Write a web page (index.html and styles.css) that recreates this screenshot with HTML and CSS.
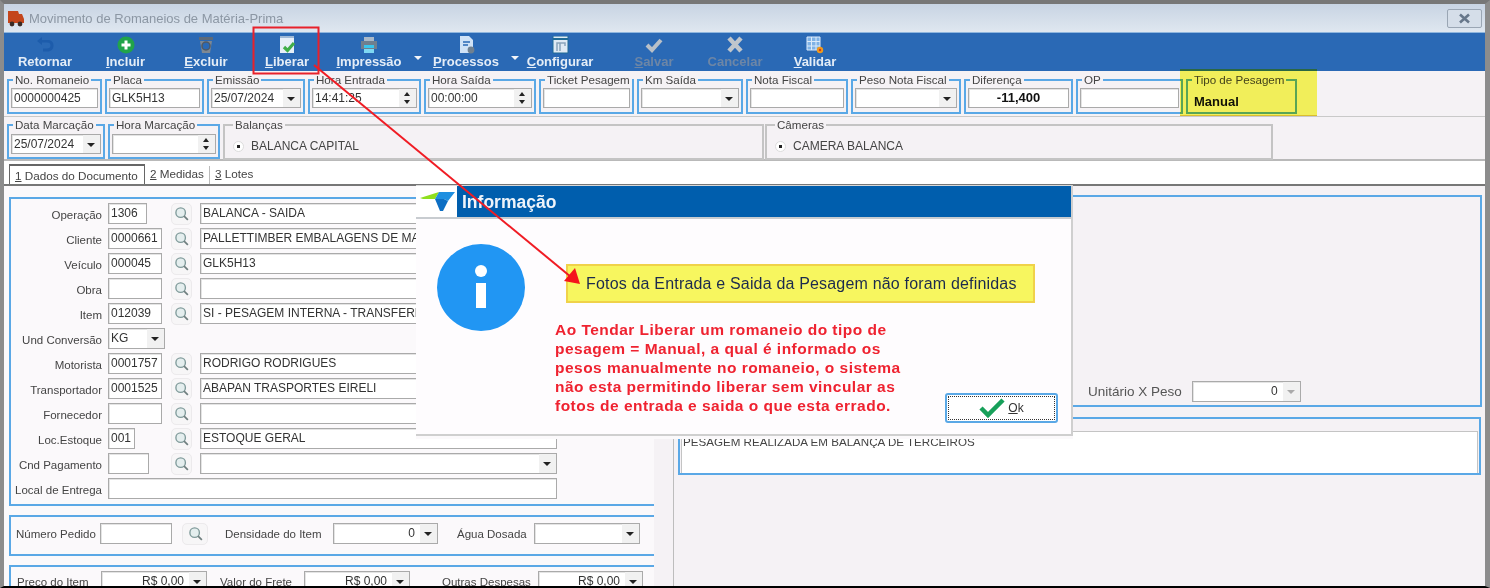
FILE: index.html
```html
<!DOCTYPE html>
<html lang="pt">
<head>
    <meta charset="UTF-8">
    <title>Movimento de Romaneios de Matéria-Prima</title>
    <link rel="stylesheet" href="styles.css">
</head>
<body>
    <svg class="svg-defs" width="0" height="0">
        <symbol id="lupa" viewBox="0 0 20 20">
            <circle cx="9" cy="9" r="5.6" fill="#e4eeee" stroke="#7f9a9a" stroke-width="1.6"/>
            <path d="M13 13l4.5 4.5" stroke="#6f7f7f" stroke-width="2"/>
        </symbol>
    </svg>

    <div class="window">
        <div class="titlebar">
            <svg class="app-icon" viewBox="0 0 18 17">
                <path d="M1 1h10l1 3h3l2 5v4H1z" fill="#c4461c"/>
                <circle cx="5" cy="14" r="2.4" fill="#3a2a24"/>
                <circle cx="13" cy="14" r="2.4" fill="#3a2a24"/>
            </svg>
            <span class="title-text">Movimento de Romaneios de Matéria-Prima</span>
            <div class="close-btn">
                <svg width="13" height="11" viewBox="0 0 13 11"><path d="M2 1.5l9 8M11 1.5l-9 8" stroke="#67778a" stroke-width="2.6"/></svg>
            </div>
        </div>

        <div class="toolbar">
            <div class="tool">
                <svg class="tool-icon" viewBox="0 0 20 18"><path d="M7 1L2 5l5 4V6.5h5c2.4 0 3.5 1.2 3.5 3s-1.400 3-3.500 3H8v3h4.500c3.800 0 6-2.400 6-6s-2.300-5.500-6-5.500H7z" fill="#1d5cab"/></svg>
                <span class="tool-label">Retornar</span>
            </div>
            <div class="tool">
                <svg class="tool-icon" viewBox="0 0 20 18"><circle cx="10" cy="9" r="8.500" fill="#21a44a"/><path d="M10 4.500v9M5.500 9h9" stroke="#fff" stroke-width="3"/></svg>
                <span class="tool-label"><u>I</u>ncluir</span>
            </div>
            <div class="tool">
                <svg class="tool-icon" viewBox="0 0 20 18"><path d="M3 1h14v3H3z" fill="#5d6a78"/><path d="M4 5h12l-2 12H6z" fill="#7d8894"/><circle cx="10" cy="10" r="4" fill="#2a69b5" stroke="#4f5a66" stroke-width="1.500"/></svg>
                <span class="tool-label"><u>E</u>xcluir</span>
            </div>
            <div class="tool">
                <svg class="tool-icon" viewBox="0 0 20 18"><path d="M3 0h14v17H3z" fill="#e6eff8"/><path d="M3 0h14v2H3z" fill="#9fb9d6"/><path d="M7 11l3.500 3.500L17 7" fill="none" stroke="#3fae49" stroke-width="3.200"/></svg>
                <span class="tool-label"><u>L</u>iberar</span>
            </div>
            <div class="tool">
                <svg class="tool-icon" viewBox="0 0 20 18"><path d="M5 1h10v4H5z" fill="#a9b9c9"/><path d="M2 5h16v8H2z" fill="#6f7f8f"/><path d="M5 9h10v3H5z" fill="#38c6ee"/><path d="M5 13h10v4H5z" fill="#7fd8f2"/></svg>
                <span class="tool-label"><u>I</u>mpressão</span>
            </div>
            <div class="tool-caret"></div>
            <div class="tool">
                <svg class="tool-icon" viewBox="0 0 20 18"><path d="M4 0h9l4 4v13H4z" fill="#cfe2f6"/><path d="M7 6h7M7 9h5" stroke="#2a69b5" stroke-width="1.300"/><circle cx="15" cy="14" r="3.400" fill="#6f8090"/></svg>
                <span class="tool-label"><u>P</u>rocessos</span>
            </div>
            <div class="tool-caret"></div>
            <div class="tool">
                <svg class="tool-icon" viewBox="0 0 20 18"><path d="M3 0h15v17H3z" fill="#dfeaf4" stroke="#1f6b96"/><path d="M3 3h15" stroke="#1f6b96" stroke-width="2"/><path d="M7 15V7h3v8M10 7h5v3" fill="none" stroke="#8aa4ba" stroke-width="1.500"/></svg>
                <span class="tool-label"><u>C</u>onfigurar</span>
            </div>
            <div class="tool-gap"></div>
            <div class="tool">
                <svg class="tool-icon" viewBox="0 0 20 18"><path d="M3 9l5 5 9-10" fill="none" stroke="#b9c0c8" stroke-width="4"/></svg>
                <span class="tool-label tool-off"><u>S</u>alvar</span>
            </div>
            <div class="tool">
                <svg class="tool-icon" viewBox="0 0 20 18"><path d="M4 2l12 13M16 2L4 15" stroke="#c0c6cc" stroke-width="4.500"/></svg>
                <span class="tool-label tool-off">Cancelar</span>
            </div>
            <div class="tool">
                <svg class="tool-icon" viewBox="0 0 20 18"><path d="M2 1h13v13H2zM2 5.500h13M2 10h13M6.500 1v13M11 1v13" fill="#7fb2e6" stroke="#dcebfa"/><circle cx="15" cy="14" r="3.200" fill="#ef9a1c"/><circle cx="15" cy="14" r="1.200" fill="#d13a1c"/></svg>
                <span class="tool-label"><u>V</u>alidar</span>
            </div>
        </div>

        <div class="row-top">
            <fieldset class="group"><legend>No. Romaneio</legend><div class="field">0000000425</div></fieldset>
            <fieldset class="group"><legend>Placa</legend><div class="field">GLK5H13</div></fieldset>
            <fieldset class="group"><legend>Emissão</legend><div class="field combo">25/07/2024<span class="arrow"></span></div></fieldset>
            <fieldset class="group"><legend>Hora Entrada</legend><div class="field combo">14:41:25<span class="spin"></span></div></fieldset>
            <fieldset class="group"><legend>Hora Saída</legend><div class="field combo">00:00:00<span class="spin"></span></div></fieldset>
            <fieldset class="group"><legend>Ticket Pesagem</legend><div class="field"></div></fieldset>
            <fieldset class="group"><legend>Km Saída</legend><div class="field combo"><span class="arrow"></span></div></fieldset>
            <fieldset class="group"><legend>Nota Fiscal</legend><div class="field"></div></fieldset>
            <fieldset class="group"><legend>Peso Nota Fiscal</legend><div class="field combo"><span class="arrow"></span></div></fieldset>
            <fieldset class="group"><legend>Diferença</legend><div class="field field-strong">-11,400</div></fieldset>
            <fieldset class="group"><legend>OP</legend><div class="field"></div></fieldset>
            <fieldset class="group"><legend>Tipo de Pesagem</legend><div class="plain-value">Manual</div></fieldset>
        </div>

        <div class="row-second">
            <fieldset class="group group-data"><legend>Data Marcação</legend><div class="field combo">25/07/2024<span class="arrow"></span></div></fieldset>
            <fieldset class="group group-hora"><legend>Hora Marcação</legend><div class="field combo"><span class="spin"></span></div></fieldset>
            <fieldset class="group-gray group-balancas"><legend>Balanças</legend><div class="radio-line"><span class="radio"></span>BALANCA CAPITAL</div></fieldset>
            <fieldset class="group-gray group-cameras"><legend>Câmeras</legend><div class="radio-line"><span class="radio"></span>CAMERA BALANCA</div></fieldset>
        </div>

        <div class="tabs">
            <div class="tab tab-active"><u>1</u> Dados do Documento</div>
            <div class="tab tab-sep"><u>2</u> Medidas</div>
            <div class="tab"><u>3</u> Lotes</div>
        </div>

        <div class="content">
            <div class="col-left">
                <div class="box box-main">
                    <div class="form-grid">
                        <label>Operação</label><div class="field w-39">1306</div><div class="lupa"><svg><use href="#lupa"/></svg></div><div class="field">BALANCA - SAIDA</div>
                        <label>Cliente</label><div class="field w-54">0000661</div><div class="lupa"><svg><use href="#lupa"/></svg></div><div class="field">PALLETTIMBER EMBALAGENS DE MADEIRA LTDA</div>
                        <label>Veículo</label><div class="field w-54">000045</div><div class="lupa"><svg><use href="#lupa"/></svg></div><div class="field">GLK5H13</div>
                        <label>Obra</label><div class="field w-54"></div><div class="lupa"><svg><use href="#lupa"/></svg></div><div class="field"></div>
                        <label>Item</label><div class="field w-54">012039</div><div class="lupa"><svg><use href="#lupa"/></svg></div><div class="field">SI - PESAGEM INTERNA - TRANSFERENCIA</div>
                        <label>Und Conversão</label><div class="field combo">KG<span class="arrow"></span></div><div></div><div></div>
                        <label>Motorista</label><div class="field w-54">0001757</div><div class="lupa"><svg><use href="#lupa"/></svg></div><div class="field">RODRIGO RODRIGUES</div>
                        <label>Transportador</label><div class="field w-54">0001525</div><div class="lupa"><svg><use href="#lupa"/></svg></div><div class="field">ABAPAN TRASPORTES EIRELI</div>
                        <label>Fornecedor</label><div class="field w-54"></div><div class="lupa"><svg><use href="#lupa"/></svg></div><div class="field"></div>
                        <label>Loc.Estoque</label><div class="field w-27">001</div><div class="lupa"><svg><use href="#lupa"/></svg></div><div class="field">ESTOQUE GERAL</div>
                        <label>Cnd Pagamento</label><div class="field w-41"></div><div class="lupa"><svg><use href="#lupa"/></svg></div><div class="field combo"><span class="arrow"></span></div>
                        <label>Local de Entrega</label><div class="field span-3"></div>
                    </div>
                </div>
                <div class="box box-pedido">
                    <label class="lbl-pedido">Número Pedido</label>
                    <div class="field w-72"></div>
                    <div class="lupa lupa-wide"><svg><use href="#lupa"/></svg></div>
                    <label class="lbl-densidade">Densidade do Item</label>
                    <div class="field combo num w-105">0<span class="arrow"></span></div>
                    <label class="lbl-agua">Água Dosada</label>
                    <div class="field combo w-106"><span class="arrow"></span></div>
                </div>
                <div class="box box-precos">
                    <label class="lbl-preco">Preço do Item</label>
                    <div class="field combo num w-106">R$ 0,00<span class="arrow"></span></div>
                    <label class="lbl-frete">Valor do Frete</label>
                    <div class="field combo num w-106">R$ 0,00<span class="arrow"></span></div>
                    <label class="lbl-outras">Outras Despesas</label>
                    <div class="field combo num w-105">R$ 0,00<span class="arrow"></span></div>
                </div>
            </div>
            <div class="col-right">
                <div class="panel panel-main">
                    <label class="lbl-unitario">Unitário X Peso</label>
                    <div class="field combo num w-109">0<span class="arrow arrow-off"></span></div>
                </div>
                <div class="panel panel-obs">
                    <div class="memo">PESAGEM REALIZADA EM BALANÇA DE TERCEIROS</div>
                </div>
            </div>
        </div>

        <div class="dialog">
            <div class="dialog-head">
                <div class="dialog-logo">
                    <svg width="35" height="19" viewBox="0 0 35 19">
                        <path d="M0 6L19 0l-4 7H3z" fill="#8fe01e"/>
                        <path d="M19 0h16l-7 9-4-2-9 0z" fill="#1f8fe0"/>
                        <path d="M15 7h9l4 2-5 10h-3z" fill="#0d6fc4"/>
                    </svg>
                </div>
                <div class="dialog-title">Informação</div>
            </div>
            <div class="dialog-body">
                <svg class="info-icon" viewBox="0 0 88 87">
                    <ellipse cx="44" cy="43.500" rx="44" ry="43.500" fill="#2196f3"/>
                    <circle cx="44" cy="27" r="6" fill="#fff"/>
                    <path d="M39 39h10v25H39z" fill="#fff"/>
                </svg>
                <div class="dialog-text">
                    <div class="notice">Fotos da Entrada e Saida da Pesagem não foram definidas</div>
                    <div class="msg-row">
                        <p class="red-note">Ao Tendar Liberar um romaneio do tipo de pesagem = Manual, a qual é informado os pesos manualmente no romaneio, o sistema não esta permitindo liberar sem vincular as fotos de entrada e saida o que esta errado.</p>
                        <div class="ok-btn">
                            <svg width="26" height="20" viewBox="0 0 26 20"><path d="M2 10l7 7L24 2" fill="none" stroke="#17a05a" stroke-width="4.500"/></svg>
                            <span><u>O</u>k</span>
                        </div>
                    </div>
                </div>
            </div>
        </div>

        <div class="mark-yellow"></div>
        <svg class="annotation" width="1490" height="588" viewBox="0 0 1490 588">
            <rect x="253.500" y="27.500" width="65" height="46" fill="none" stroke="#e8212b" stroke-width="2"/>
            <path d="M314 65L571 277" stroke="#f01c24" stroke-width="2"/>
            <path d="M580 284l-16-3 11-13z" fill="#f5141c"/>
        </svg>
    </div>
</body>
</html>
```

FILE: styles.css
```css
* {
    box-sizing: border-box;
}
body {
    margin: 0;
    background-color: #111;
    font-family: "Liberation Sans", Arial, sans-serif;
    font-size: 12px;
    color: #333;
    overflow: hidden;
}
.svg-defs {
    display: block;
    height: 0;
}
.window {
    position: relative;
    width: 1490px;
    height: 588px;
    overflow: hidden;
    background-color: #f5f2f5;
    border-top: 4px solid #777;
    border-left: 4px solid #8c8c8c;
    border-right: 5px solid #8c8c8c;
    border-bottom: 2px solid #000;
}

/* barra de titulo */
.titlebar {
    height: 28px;
    display: flex;
    align-items: center;
    padding: 0 3px 0 3px;
    background: linear-gradient(#c8d4e3, #dfe7f0);
}
.app-icon {
    width: 18px;
    height: 17px;
    margin-right: 4px;
}
.title-text {
    flex: 1;
    font-size: 13px;
    color: #8c97a4;
}
.close-btn {
    width: 35px;
    height: 19px;
    display: flex;
    align-items: center;
    justify-content: center;
    border: 1px solid #9aa6b4;
    border-radius: 2px;
    background-color: #d5dee9;
}

/* barra de ferramentas */
.toolbar {
    height: 39px;
    padding-left: 1px;
    display: grid;
    grid-template-columns: 80px 81px 80px 82px 82px 16px 80px 18px 72px 18px 80px 82px 78px;
    background-color: #2a69b5;
    border-top: 1px solid #8fb6de;
}
.tool {
    display: flex;
    flex-direction: column;
    align-items: center;
    padding-top: 3px;
}
.tool-icon {
    width: 20px;
    height: 18px;
}
.tool-label {
    margin-top: 1px;
    font-size: 13px;
    line-height: 14px;
    font-weight: bold;
    color: #e4edf7;
    white-space: nowrap;
}
.tool-off {
    color: #6d86a6;
}
.tool-caret {
    position: relative;
}
.tool-caret::after {
    content: "";
    display: block;
    margin: 23px auto 0;
    width: 0;
    border-left: 4px solid transparent;
    border-right: 4px solid transparent;
    border-top: 4px solid #f2f5f9;
}

/* grupos do cabecalho */
.row-top {
    height: 46px;
    padding: 2px 0 0 3px;
    display: grid;
    grid-template-columns: 95px 99px 98px 113px 112px 95px 106px 102px 110px 109px 107px 111px;
    column-gap: 3px;
    border-bottom: 1px solid #c9c9c9;
}
.row-second {
    height: 44px;
    padding: 1px 0 0 3px;
    display: grid;
    grid-template-columns: 98px 112px 541px 506px;
    column-gap: 3px;
    border-bottom: 2px solid #b9b9b9;
}
.group {
    min-width: 0;
    height: 41px;
    margin: 0;
    padding: 1px 2px 2px 2px;
    border: 2px solid #5aa8e6;
}
.group legend,
.group-gray legend {
    margin-left: 2px;
    padding: 0 2px;
    font-size: 11.600px;
    line-height: 14px;
    color: #444;
    white-space: nowrap;
}
.group .field {
    height: 20px;
    line-height: 18px;
}
.group-data .field,
.group-hora .field {
    margin-top: 1px;
}
.group-gray {
    min-width: 0;
    height: 42px;
    margin: 0;
    padding: 0 0 0 6px;
    border: 2px solid #c4c4c4;
}
.group-gray legend {
    margin-left: 2px;
}
.group-cameras {
    margin-left: -2px;
}
.radio-line {
    display: flex;
    align-items: center;
    margin-top: 4px;
    height: 20px;
    color: #444;
}
.radio {
    width: 11px;
    height: 11px;
    margin: 0 7px 0 2px;
    border-radius: 50%;
    background: radial-gradient(circle, #222 0 1.500px, #fff 2px);
    border: 1px solid #ddd;
}
.plain-value {
    padding: 6px 0 0 4px;
    font-size: 13px;
    font-weight: bold;
    color: #111;
}

/* campos */
.field {
    position: relative;
    height: 21px;
    padding: 0 2px;
    line-height: 19px;
    background-color: #fff;
    border: 1px solid #aaa;
    box-shadow: inset 1px 1px 0 #e4e4e4;
    color: #333;
    white-space: nowrap;
    overflow: hidden;
}
.field-strong {
    text-align: center;
    font-size: 13px;
    font-weight: bold;
    color: #111;
}
.combo {
    padding-right: 20px;
}
.num {
    text-align: right;
    padding-right: 22px;
}
.arrow,
.spin {
    position: absolute;
    top: 0;
    right: 0;
    width: 17px;
    height: 100%;
    background-color: #f1f1f1;
}
.arrow::after {
    content: "";
    position: absolute;
    top: 8px;
    left: 4px;
    border-left: 4px solid transparent;
    border-right: 4px solid transparent;
    border-top: 4px solid #222;
}
.arrow-off::after {
    border-top-color: #aaa;
}
.spin::before,
.spin::after {
    content: "";
    position: absolute;
    left: 5px;
    border-left: 3px solid transparent;
    border-right: 3px solid transparent;
}
.spin::before {
    top: 3px;
    border-bottom: 4px solid #222;
}
.spin::after {
    bottom: 3px;
    border-top: 4px solid #222;
}

/* abas */
.tabs {
    height: 25px;
    padding: 3px 0 0 5px;
    display: flex;
    background-color: #fff;
    border-bottom: 2px solid #777;
    font-size: 11.700px;
}
.tab {
    padding: 2px 5px 0;
    line-height: 16px;
    color: #444;
}
.tab-active {
    width: 136px;
    padding-left: 5px;
    border: 1px solid #666;
    border-bottom: none;
    border-top-width: 2px;
    background-color: #fff;
    white-space: nowrap;
}
.tab-sep {
    border-right: 1px solid #bbb;
    padding-right: 5px;
    height: 18px;
    margin-top: 2px;
    padding-top: 0;
}

/* conteudo */
.content {
    height: 402px;
    display: flex;
}
.col-left {
    width: 650px;
    padding: 11px 0 0 5px;
    display: flex;
    flex-direction: column;
    gap: 9px;
    background-color: #fbf9fb;
}
.box {
    flex: none;
    border: 2px solid #5aa8e6;
    border-right: none;
}
.box-main {
    height: 309px;
    padding: 2px 0 0;
}
.box-pedido {
    height: 41px;
    display: flex;
    align-items: center;
    padding-bottom: 4px;
}
.box-precos {
    height: 60px;
    display: flex;
    align-items: flex-start;
    padding-top: 4px;
}
label {
    flex: none;
    font-size: 11.500px;
    color: #444;
    white-space: nowrap;
}
.form-grid {
    display: grid;
    grid-template-columns: 93px 57px 27px 357px;
    grid-auto-rows: 25px;
    column-gap: 4px;
    align-items: center;
}
.form-grid label {
    padding: 2px 2px 0 0;
    text-align: right;
}
.w-27 { width: 27px; }
.w-39 { width: 39px; }
.w-41 { width: 41px; }
.w-54 { width: 54px; }
.w-72 { width: 72px; flex: none; }
.w-105 { width: 105px; flex: none; }
.w-106 { width: 106px; flex: none; }
.w-109 { width: 109px; flex: none; }
.span-3 {
    grid-column: span 3;
}
.lupa {
    width: 21px;
    height: 22px;
    margin-left: 2px;
    display: flex;
    align-items: center;
    justify-content: center;
    background-color: #f7f6f7;
    border-radius: 5px;
    border: 1px solid #eceaec;
}
.lupa svg {
    width: 17px;
    height: 17px;
}
.lupa-wide {
    width: 26px;
    margin-left: 10px;
    flex: none;
}
.lbl-pedido { width: 78px; margin: 0 6px 0 5px; }
.lbl-densidade { width: 97px; margin: 0 11px 0 17px; }
.lbl-agua { width: 70px; margin: 0 7px 0 19px; }
.lbl-preco { width: 72px; margin: 5px 12px 0 6px; }
.lbl-frete { width: 68px; margin: 5px 16px 0 13px; }
.lbl-outras { width: 89px; margin: 5px 7px 0 32px; }

.col-right {
    flex: 1;
    padding: 9px 3px 0 4px;
    margin-left: 19px;
    border-left: 1px solid #bdbdbd;
}
.panel {
    border: 2px solid #5aa8e6;
}
.panel-main {
    height: 212px;
    display: flex;
    align-items: flex-end;
    padding: 0 0 3px 408px;
}
.lbl-unitario {
    margin: 0 10px 3px 0;
    font-size: 13.500px;
    color: #555;
}
.panel-obs {
    height: 58px;
    margin-top: 10px;
    padding: 12px 1px 0 1px;
    margin-right: 1px;
}
.memo {
    height: 42px;
    padding: 3px 1px;
    font-size: 11.600px;
    background-color: #fff;
    border: 1px solid #c4c4c4;
    border-bottom: none;
    color: #444;
}

/* mensagem */
.dialog {
    position: absolute;
    left: 412px;
    top: 181px;
    width: 657px;
    height: 251px;
    background-color: #fefcfe;
    border: 2px solid #cfcfcf;
    border-left: none;
    border-top: 1px solid #d8d8d8;
    box-shadow: 0 3px 0 #fbf9fb;
}
.dialog-head {
    height: 33px;
    display: flex;
    border-bottom: 2px solid #c8ccd0;
}
.dialog-logo {
    width: 41px;
    padding: 6px 0 0 4px;
    background-color: #fff;
}
.dialog-title {
    flex: 1;
    padding: 6px 0 0 5px;
    background-color: #005ead;
    color: #eef4fa;
    font-size: 17.500px;
    font-weight: bold;
    line-height: 20px;
}
.dialog-body {
    display: flex;
    padding-left: 21px;
}
.info-icon {
    flex: none;
    width: 88px;
    height: 87px;
    margin-top: 25px;
}
.dialog-text {
    margin-left: 30px;
    padding-top: 45px;
}
.notice {
    width: 469px;
    height: 39px;
    margin-left: 11px;
    padding-left: 18px;
    line-height: 36px;
    font-size: 16px;
    letter-spacing: 0.180px;
    white-space: nowrap;
    color: #1b2a4e;
    background-color: #f7f65f;
    border: 2px solid #f0d24a;
}
.msg-row {
    display: flex;
    margin-top: 17px;
}
.red-note {
    width: 390px;
    margin: 0;
    padding: 0 40px 8px 0;
    font-size: 15.500px;
    line-height: 19px;
    font-weight: bold;
    color: #ef2230;
    letter-spacing: 0.480px;
}
.ok-btn {
    flex: none;
    align-self: flex-end;
    width: 113px;
    height: 30px;
    display: flex;
    align-items: center;
    justify-content: center;
    gap: 3px;
    background-color: #fff;
    border: 2px solid #5aa8e6;
    border-radius: 3px;
    outline: 1px dotted #333;
    outline-offset: -4px;
    color: #333;
}

/* marcacoes por cima da tela */
.mark-yellow {
    position: absolute;
    left: 1176px;
    top: 65px;
    width: 137px;
    height: 47px;
    background-color: #fbfb5e;
    mix-blend-mode: multiply;
    border-bottom: 1px solid #e4c830;
}
.annotation {
    position: absolute;
    left: -4px;
    top: -4px;
    pointer-events: none;
}
```
